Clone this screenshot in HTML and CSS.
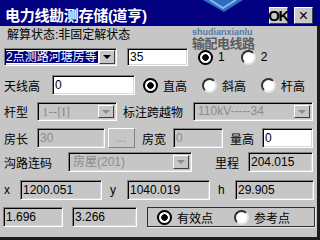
FILE: index.html
```html
<!DOCTYPE html>
<html lang="zh">
<head>
    <meta charset="UTF-8">
    <meta name="viewport" content="width=device-width, initial-scale=1.0">
    <title>电力线勘测存储</title>
    <link rel="stylesheet" href="styles.css">
</head>
<body>
<div class="window">
    <div class="titlebar">
        <span class="title">电力线勘测存储(道亨)</span>
        <span class="cap-btn ok">OK</span>
        <span class="cap-btn close">×</span>
    </div>

    <div class="content">
        <div class="status">解算状态:非固定解状态</div>

        <!-- Messmodus -->
        <div class="row row-2">
            <div class="combo mode w-mode">
                <span class="val sel">2点测路河塘房等</span>
                <span class="drop"><i class="arrow"></i></span>
            </div>
            <div class="edit w-35">35</div>
            <span class="opt o-1"><i class="radio on"></i>1</span>
            <span class="opt o-2"><i class="radio"></i>2</span>
        </div>

        <!-- Antennenhöhe -->
        <div class="row row-3">
            <span class="lbl w-48">天线高</span>
            <div class="edit w-ant">0</div>
            <span class="opt o-a"><i class="radio on"></i>直高</span>
            <span class="opt o-b"><i class="radio"></i>斜高</span>
            <span class="opt o-b"><i class="radio"></i>杆高</span>
        </div>

        <div class="row row-4">
            <span class="lbl w-33">杆型</span>
            <div class="combo off w-80">
                <span class="val serif">1--[I]</span>
                <span class="drop"><i class="arrow"></i></span>
            </div>
            <span class="lbl w-70 ml-6">标注跨越物</span>
            <div class="combo off w-120">
                <span class="val">110kV-----34</span>
                <span class="drop"><i class="arrow"></i></span>
            </div>
        </div>

        <div class="row row-5">
            <span class="lbl w-33">房长</span>
            <div class="edit off w-68">30</div>
            <span class="btn">...</span>
            <span class="lbl w-31 ml-7">房宽</span>
            <div class="edit off w-50">0</div>
            <span class="lbl w-32 ml-7">量高</span>
            <div class="edit w-51">0</div>
        </div>

        <div class="row row-6">
            <span class="lbl w-64">沟路连码</span>
            <div class="combo off w-124">
                <span class="val">房屋(201)</span>
                <span class="drop"><i class="arrow"></i></span>
            </div>
            <span class="lbl w-33 ml-23">里程</span>
            <div class="edit ro w-65">204.015</div>
        </div>

        <!-- Koordinaten -->
        <div class="row row-7">
            <span class="lbl w-16">x</span>
            <div class="edit ro w-82">1200.051</div>
            <span class="lbl w-17 ml-8">y</span>
            <div class="edit ro w-83">1040.019</div>
            <span class="lbl w-17 ml-8">h</span>
            <div class="edit ro w-79">29.905</div>
        </div>

        <div class="row row-8">
            <div class="edit ro w-60">1.696</div>
            <div class="edit ro w-65 ml-9">3.266</div>
            <div class="frame">
                <span class="opt"><i class="radio on"></i>有效点</span>
                <span class="opt o-ref"><i class="radio"></i>参考点</span>
            </div>
        </div>
    </div>

    <!-- Wasserzeichen -->
    <div class="watermark">
        <svg class="wm-logo" width="40" height="13" viewBox="0 0 40 13">
            <path d="M0 0 L40 0 L21 12 Z" fill="#2d6cc0"/>
            <path d="M7 0 L20 8 L33 0" fill="none" stroke="#8ab8ec" stroke-width="2"/>
        </svg>
        <div class="wm-en">shudianxianlu</div>
        <div class="wm-cn">输配电线路</div>
    </div>
</div>
</body>
</html>
```

FILE: styles.css
```css
/* Grundlayout */
body {
    margin: 0;
    font-family: "Liberation Sans", "Noto Sans CJK SC", sans-serif;
    font-size: 12px;
    color: #000;
}
.window {
    position: relative;
    width: 320px;
    height: 240px;
    background-color: #c6c6c6;
    overflow: hidden;
}

/* Titelleiste */
.titlebar {
    height: 26px;
    background-color: #000080;
    display: flex;
    align-items: center;
    padding: 0 7px 0 5px;
}
.title {
    flex: 1;
    color: #fff;
    font-weight: bold;
    font-size: 15px;
    padding-top: 3px;
    letter-spacing: -0.3px;
}
.cap-btn {
    box-sizing: border-box;
    width: 19px;
    height: 17px;
    margin-top: 5px;
    background-color: #c8c8c8;
    border: 1px solid;
    border-color: #fff #404040 #404040 #fff;
    display: flex;
    justify-content: center;
    align-items: center;
    font-weight: bold;
}
.cap-btn.ok {
    font-size: 15px;
    letter-spacing: -1.5px;
    padding-right: 1px;
}
.cap-btn.close {
    margin-left: 6px;
    font-weight: normal;
    font-size: 16px;
}

/* Inhalt */
.content {
    box-sizing: border-box;
    height: 214px;
    padding-left: 4px;
    border-right: 3px solid #1c1c1c;
    border-bottom: 3px solid #1c1c1c;
}
.status {
    height: 18px;
    line-height: 18px;
    padding-left: 3px;
}
.row {
    display: flex;
    align-items: center;
    height: 20px;
    margin-top: 7px;
}
.row-2 { height: 18px; margin-top: 4px; }
.row-3 { margin-top: 9px; }
.row-4 { height: 19px; }
.row-6 { margin-top: 4px; }
.row-7 { margin-top: 8px; }
.row-8 { margin-left: -1px; }

.lbl {
    flex: none;
    white-space: nowrap;
}

/* Eingabefelder */
.edit {
    box-sizing: border-box;
    flex: none;
    height: 100%;
    padding-left: 2px;
    background-color: #fff;
    border: 1px solid;
    border-color: #808080 #fff #fff #808080;
    box-shadow: inset 1px 1px #000, inset -1px -1px #d8d8d8;
    display: flex;
    align-items: center;
    font-size: 12px;
}
.edit.ro {
    background-color: #c6c6c6;
}
.edit.off {
    background-color: #c6c6c6;
    color: #8c8c8c;
}

.combo {
    box-sizing: border-box;
    flex: none;
    height: 100%;
    padding: 2px;
    background-color: #fff;
    border: 1px solid;
    border-color: #808080 #fff #fff #808080;
    box-shadow: inset 1px 1px #000, inset -1px -1px #d8d8d8;
    display: flex;
    align-items: stretch;
}
.combo.mode {
    padding: 1px;
}
.combo .val {
    flex: 1;
    display: flex;
    align-items: center;
    padding-left: 2px;
    line-height: 13px;
    white-space: nowrap;
    overflow: hidden;
}
.combo .val.sel {
    background-color: #000080;
    color: #fff;
    margin: 1px 1px 1px 0;
    padding-left: 0;
}
.combo.off {
    background-color: #c6c6c6;
    color: #8c8c8c;
}
.serif {
    font-family: "Liberation Serif", serif;
    font-size: 13px;
}
.drop {
    box-sizing: border-box;
    width: 16px;
    background-color: #c6c6c6;
    border: 1px solid;
    border-color: #fff #404040 #404040 #fff;
    display: flex;
    justify-content: center;
    align-items: center;
}
.arrow {
    width: 0;
    height: 0;
    border-left: 4px solid transparent;
    border-right: 4px solid transparent;
    border-top: 4px solid #000;
}
.combo.off .arrow {
    border-top-color: #8c8c8c;
}

.btn {
    box-sizing: border-box;
    width: 27px;
    height: 100%;
    margin-left: 3px;
    border: 1px solid;
    border-color: #fff #808080 #808080 #fff;
    color: #8c8c8c;
    display: flex;
    justify-content: center;
    align-items: center;
}

/* Optionsfelder */
.opt {
    display: flex;
    align-items: center;
    gap: 5px;
    white-space: nowrap;
}
.radio {
    box-sizing: border-box;
    width: 15px;
    height: 15px;
    border-radius: 50%;
    background-color: #fff;
    border: 2px solid;
    border-color: #303030 #e4e4e4 #e4e4e4 #303030;
}
.radio.on {
    border-color: #000;
    background: radial-gradient(circle, #000 0 3px, #fff 3.5px);
}
.o-1 { margin-left: 10px; }
.o-2 { margin-left: 16px; }
.o-a { margin-left: 8px; }
.o-b { margin-left: 15px; }
.o-ref { margin-left: 21px; }

.frame {
    box-sizing: border-box;
    width: 168px;
    height: 100%;
    margin-left: 10px;
    padding-left: 9px;
    border: 1px solid #303030;
    box-shadow: 1px 1px #e8e8e8;
    display: flex;
    align-items: center;
}

/* Breiten */
.w-mode { width: 113px; }
.w-35 { width: 61px; margin-left: 10px; }
.w-ant { width: 83px; }
.w-16 { width: 16px; }
.w-17 { width: 17px; }
.w-31 { width: 31px; }
.w-32 { width: 32px; }
.w-33 { width: 33px; }
.w-48 { width: 48px; }
.w-50 { width: 50px; }
.w-51 { width: 51px; }
.w-60 { width: 60px; }
.w-64 { width: 64px; }
.w-65 { width: 65px; }
.w-68 { width: 68px; }
.w-70 { width: 70px; }
.w-79 { width: 79px; }
.w-80 { width: 80px; }
.w-82 { width: 82px; }
.w-83 { width: 83px; }
.w-120 { width: 120px; }
.w-124 { width: 124px; }
.ml-6 { margin-left: 6px; }
.ml-7 { margin-left: 7px; }
.ml-8 { margin-left: 8px; }
.ml-9 { margin-left: 9px; }
.ml-23 { margin-left: 23px; }

/* Wasserzeichen */
.watermark {
    position: absolute;
    left: 192px;
    top: 0;
    width: 70px;
    height: 50px;
}
.wm-logo {
    position: absolute;
    left: 11px;
    top: 0;
}
.wm-en {
    position: absolute;
    top: 27px;
    left: 0;
    font-size: 9px;
    line-height: 10px;
    font-weight: bold;
    color: #4d7ca6;
}
.wm-cn {
    position: absolute;
    top: 37px;
    left: 0;
    font-size: 13px;
    line-height: 13px;
    font-weight: bold;
    letter-spacing: -0.5px;
    color: #4a4a4a;
    opacity: 0.85;
}
```
